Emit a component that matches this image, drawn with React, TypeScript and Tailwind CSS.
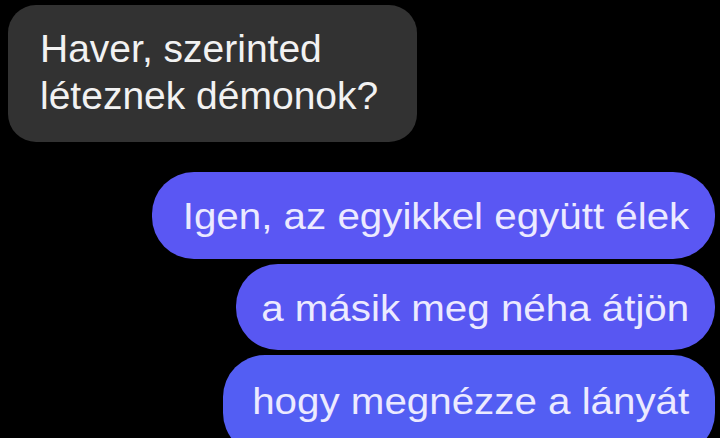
import React from "react";

const font = { fontFamily: '"Liberation Sans", Arial, sans-serif' };

function Blue({ w, text, bg, h, pt }: { w: string; text: string; bg: string; h: string; pt: string }) {
  return (
    <div className={`${w} ${bg} ${h} ${pt} shrink-0 rounded-[42px] flex items-start justify-end pr-[26px]`}>
      <span className="inline-block origin-right scale-x-[1.12] text-[36px] leading-none text-[#eceaff] whitespace-nowrap">
        {text}
      </span>
    </div>
  );
}

export default function App() {
  return (
    <div className="w-[720px] h-[438px] bg-black overflow-hidden flex flex-col" style={font}>
      <div className="shrink-0 mt-[5px] ml-[8px] w-[409px] h-[137px] rounded-[28px] bg-[#323232] pl-[32px] pt-[20px] text-[39px] leading-[47px] text-[#f2f2f2]">
        Haver, szerinted
        <br />
        léteznek démonok?
      </div>
      <div className="shrink-0 mt-[30px] flex flex-col items-end gap-[5px] pr-[5px]">
        <Blue w="w-[563px]" h="h-[87px]" pt="pt-[27px]" bg="bg-[#5a57f3]" text="Igen, az egyikkel együtt élek" />
        <Blue w="w-[479px]" h="h-[86px]" pt="pt-[27px]" bg="bg-[#5857f2]" text="a másik meg néha átjön" />
        <Blue w="w-[492px]" h="h-[100px]" pt="pt-[29px]" bg="bg-[#535ef3]" text="hogy megnézze a lányát" />
      </div>
    </div>
  );
}
